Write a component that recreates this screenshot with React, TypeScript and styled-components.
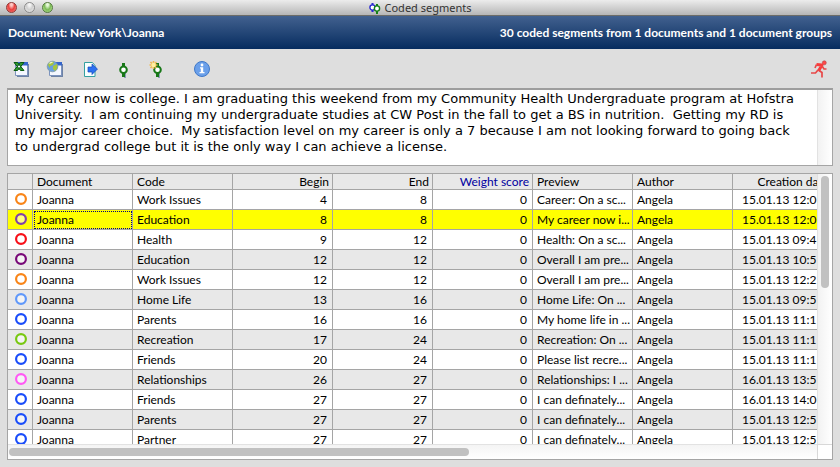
import React from "react";
import styled, { createGlobalStyle } from "styled-components";

const line = "#a5a5a5";

const GlobalStyle = createGlobalStyle`
  * { box-sizing: border-box; }
  body { margin: 0; background: #dedede; }
`;

const Window = styled.main`
  display: flex;
  flex-direction: column;
  height: 100vh;
  background: #dedede;
  color: #000;
  font: 12px/16px Lato, "Open Sans", sans-serif;
`;

const TitleBar = styled.header`
  position: relative;
  display: flex;
  align-items: center;
  justify-content: center;
  gap: 4px;
  height: 16px;
  flex: none;
  background: linear-gradient(#ececec, #b6b6b6);
  border-bottom: 1px solid #6c6c68;
`;

const Title = styled.h1`
  margin: 0;
  font: 11px/15px "Noto Sans", sans-serif;
  color: #333;
`;

const Lights = styled.div`
  position: absolute;
  left: 6px;
  top: 2px;
  display: flex;
  gap: 7px;
`;

const Light = styled.button<{ $top: string; $mid: string; $low: string; $edge: string }>`
  width: 11px;
  height: 11px;
  padding: 0;
  border: 1px solid ${(p) => p.$edge};
  border-radius: 50%;
  background: radial-gradient(ellipse at 50% 15%, ${(p) => p.$top} 0 15%, ${(p) => p.$mid} 50%, ${(p) => p.$low});
`;

const Banner = styled.section`
  display: flex;
  align-items: center;
  justify-content: space-between;
  height: 33px;
  flex: none;
  padding: 0 8px;
  color: #fff;
  font-weight: 700;
  white-space: nowrap;
  background: linear-gradient(#42618f, #062c5f);
`;

const Toolbar = styled.nav`
  display: flex;
  align-items: center;
  height: 39px;
  flex: none;
  padding: 0 12px 0 13px;
`;

const Tool = styled.button<{ $gap?: number; $end?: boolean }>`
  display: flex;
  width: 18px;
  height: 18px;
  padding: 0;
  border: 0;
  background: none;
  margin-left: ${(p) => (p.$end ? "auto" : `${p.$gap ?? 0}px`)};
`;

const Icon = styled.svg`
  display: block;
  flex: none;
`;

const Panel = styled.section`
  display: grid;
  grid-template-columns: minmax(0, 1fr) 15px;
  margin: 0 7px;
  border: 1px solid ${line};
  background: #fff;
  overflow: hidden;
`;

const TextPanel = styled(Panel)`
  height: 78px;
  flex: none;
  border-top: 2px solid #9d9d9d;
`;

const Passage = styled.p`
  margin: 0;
  padding: 1px 14px 0 7px;
  font: 13px/16px "DejaVu Sans", sans-serif;
`;

const TablePanel = styled(Panel)`
  flex: 1;
  min-height: 0;
  margin: 7px 7px;
  grid-template-rows: minmax(0, 1fr) 15px;
`;

const Viewport = styled.div`
  overflow: hidden;
`;

const VTrack = styled.div`
  padding: 2px 3px;
  border-left: 1px solid #e2e2e2;
  background: linear-gradient(90deg, #f2f2f2, #fff);
`;

const HTrack = styled.div`
  padding: 3px 1px;
  border-top: 1px solid #e2e2e2;
  background: linear-gradient(#f4f4f4, #fff);
`;

const Corner = styled.div`
  border-left: 1px solid #d8d8d8;
  border-top: 1px solid #d8d8d8;
`;

const VThumb = styled.div`
  width: 8px;
  height: 42%;
  border-radius: 4px;
  background: #c1c1c1;
`;

const HThumb = styled.div`
  width: 57%;
  height: 8px;
  border-radius: 4px;
  background: #c1c1c1;
`;

const Table = styled.table`
  width: 825px;
  min-width: 100%;
  table-layout: fixed;
  border-collapse: separate;
  border-spacing: 0;
  white-space: nowrap;
`;

const Col = styled.col<{ $w: number }>`
  width: ${(p) => p.$w}px;
`;

const Head = styled.th<{ $right?: boolean; $sorted?: boolean }>`
  height: 16px;
  padding: 0 ${(p) => (p.$right ? 3 : 4)}px 0 4px;
  overflow: hidden;
  border: solid ${line};
  border-width: 0 1px 1px 0;
  background: #e8e8e8;
  color: ${(p) => (p.$sorted ? "#0000a0" : "#000")};
  font-weight: 400;
  line-height: 15px;
  text-align: ${(p) => (p.$right ? "right" : "left")};
`;

const Row = styled.tr<{ $selected: boolean }>`
  background: ${(p) => (p.$selected ? "#ffff00" : "#fff")};
  &:nth-child(even) {
    background: ${(p) => (p.$selected ? "#ffff00" : "#e8e8e8")};
  }
`;

const Cell = styled.td<{ $right?: boolean; $focus?: boolean; $date?: boolean }>`
  height: 20px;
  padding: 1px ${(p) => (p.$right ? 5 : 4)}px 0 ${(p) => (p.$date ? 9 : 4)}px;
  overflow: hidden;
  border: solid ${line};
  border-width: 0 1px 1px 0;
  line-height: 18px;
  text-align: ${(p) => (p.$right ? "right" : "left")};
  outline: ${(p) => (p.$focus ? "1px dotted #000080" : "none")};
  outline-offset: -2px;
`;

const RingCell = styled(Cell)`
  padding: 0 0 1px 7px;
`;

const orange = "#f98518";
const blue = "#1a4dfa";

type Segment = [string, string, number, number, string, string];

const segments: Segment[] = [
  [orange, "Work Issues", 4, 8, "Career: On a sc...", "15.01.13 12:0"],
  ["#8040a8", "Education", 8, 8, "My career now i...", "15.01.13 12:0"],
  ["#f81018", "Health", 9, 12, "Health: On a sc...", "15.01.13 09:4"],
  ["#780878", "Education", 12, 12, "Overall I am pre...", "15.01.13 10:5"],
  [orange, "Work Issues", 12, 12, "Overall I am pre...", "15.01.13 12:2"],
  ["#6098fa", "Home Life", 13, 16, "Home Life: On ...", "15.01.13 09:5"],
  [blue, "Parents", 16, 16, "My home life in ...", "15.01.13 11:1"],
  ["#78c810", "Recreation", 17, 24, "Recreation: On ...", "15.01.13 11:1"],
  [blue, "Friends", 20, 24, "Please list recre...", "15.01.13 11:1"],
  ["#ff58f4", "Relationships", 26, 27, "Relationships: I ...", "16.01.13 13:5"],
  [blue, "Friends", 27, 27, "I can definately...", "16.01.13 14:0"],
  [blue, "Parents", 27, 27, "I can definately...", "15.01.13 12:5"],
  [blue, "Partner", 27, 27, "I can definately...", "15.01.13 12:5"],
];

const Ring = ({ color }: { color: string }) => (
  <Icon width="12" height="12" viewBox="0 0 12 12">
    <circle cx="6" cy="6" r="4.9" fill="#fff" fillOpacity="0.5" stroke={color} strokeWidth="2.2" />
  </Icon>
);

const WindowShape = () => (
  <>
    <path d="M4 4h12v13H4z" fill="#6d82a5" />
    <path d="M2.500 2.500h12v13h-12z" fill="#f4f7ff" stroke="#7d93bd" />
    <path d="M2 2h13v3.500H2z" fill="#3465cc" />
  </>
);

const CodeShape = ({ color }: { color: string }) => (
  <>
    <path d="M11 13v5" stroke="#8d9db8" strokeWidth="2" />
    <path d="M9.500 3v4M9.500 12v5" stroke={color} strokeWidth="3" />
    <circle cx="9.500" cy="9.800" r="3.300" fill="#fff" stroke={color} strokeWidth="2" />
  </>
);

export default function App() {
  return (
    <Window>
      <GlobalStyle />
      <TitleBar>
        <Lights>
          <Light aria-label="Close" $top="#ffc8c4" $mid="#e8413f" $low="#ff8a80" $edge="#8f3a38" />
          <Light aria-label="Minimize" $top="#f4f4f4" $mid="#cfcfcf" $low="#f0f0f0" $edge="#8c8c8c" />
          <Light aria-label="Zoom" $top="#e6f8d8" $mid="#7dbb58" $low="#c4f09c" $edge="#54793e" />
        </Lights>
        <Icon width="12" height="12" viewBox="0 0 12 12">
          <path d="M3.500 1v3M3.500 8v2" stroke="#2a2ad0" strokeWidth="2" />
          <circle cx="3.500" cy="5.500" r="2.600" fill="#fff" stroke="#2a2ad0" strokeWidth="1.400" />
          <path d="M8 2v2M8 9v3" stroke="#178017" strokeWidth="2" />
          <circle cx="8" cy="6.500" r="2.600" fill="#fff" stroke="#178017" strokeWidth="1.400" />
        </Icon>
        <Title>Coded segments</Title>
      </TitleBar>
      <Banner>
        <span>Document: New York\Joanna</span>
        <span>30 coded segments from 1 documents and 1 document groups</span>
      </Banner>
      <Toolbar>
        <Tool aria-label="Open as Excel table">
          <Icon width="18" height="18" viewBox="0 0 18 18">
            <WindowShape />
            <path d="M1 2.500h3.500l6.500 8H7.500zM11 2.500H7.500l-6.500 8h3.500z" fill="#2f9a2f" stroke="#0a5a10" strokeWidth="1" />
          </Icon>
        </Tool>
        <Tool aria-label="Open as HTML table" $gap={15}>
          <Icon width="18" height="18" viewBox="0 0 18 18">
            <g transform="translate(1 0)"><WindowShape /></g>
            <circle cx="6.500" cy="6.500" r="5.300" fill="#6ba0dc" stroke="#7d98a8" strokeWidth="0.800" />
            <path d="M2 5q1-4 6-3l-1 3-3 1v2zM7 6l4-2q1.500 4-2 7l-2-2z" fill="#a8c63c" />
            <path d="M3.500 3.500q2-1.500 3-1" fill="none" stroke="#f0f6d0" strokeWidth="1.200" />
          </Icon>
        </Tool>
        <Tool aria-label="Export" $gap={18}>
          <Icon width="18" height="18" viewBox="0 0 18 18">
            <path d="M2.500 2.500h8l2.500 3v11H2.500z" fill="#f8ffff" stroke="#35a0a0" />
            <path d="M6 7h4V4l5.500 5-5.500 5.500V12H6z" fill="#2c70f0" stroke="#1648b8" strokeWidth="0.700" />
          </Icon>
        </Tool>
        <Tool aria-label="Code" $gap={14}>
          <Icon width="18" height="18" viewBox="0 0 18 18">
            <CodeShape color="#187818" />
          </Icon>
        </Tool>
        <Tool aria-label="New code" $gap={16}>
          <Icon width="18" height="18" viewBox="0 0 18 18">
            <CodeShape color="#187818" />
            <path d="M5.500 1v8M1.500 5h8M2.500 2l6 6M8.500 2l-6 6" stroke="#f0b850" strokeWidth="1.600" />
            <circle cx="5.500" cy="5" r="2.200" fill="#fff0a0" />
          </Icon>
        </Tool>
        <Tool aria-label="Info" $gap={27}>
          <Icon width="18" height="18" viewBox="0 0 18 18">
            <circle cx="9" cy="9" r="7.500" fill="#6ba0ea" stroke="#3f78c8" />
            <circle cx="9" cy="5" r="1.400" fill="#fff" />
            <path d="M7 7.200h3.200v4.800h1.300v1.200h-5V12h1.300V8.400H7z" fill="#fff" />
          </Icon>
        </Tool>
        <Tool aria-label="Exit" $end>
          <Icon width="18" height="18" viewBox="0 0 18 18">
            <circle cx="14.300" cy="2.800" r="2" fill="#ff4848" stroke="#b04848" strokeWidth="0.600" />
            <path d="M6.500 4.500L12 5l-3.500 6" fill="none" stroke="#f83c3c" strokeWidth="3" strokeLinejoin="round" />
            <path d="M6.500 4.500L5 8M12 6l2 3h2.500M8 10l-2.500 3H1M9 10.500l3 2v5" fill="none" stroke="#e84848" strokeWidth="1.700" />
          </Icon>
        </Tool>
      </Toolbar>
      <TextPanel>
        <Passage>
          {"My career now is college. I am graduating this weekend from my Community Health Undergraduate program at Hofstra University. \u00a0I am continuing my undergraduate studies at CW Post in the fall to get a BS in nutrition. \u00a0Getting my RD is my major career choice. \u00a0My satisfaction level on my career is only a 7 because I am not looking forward to going back to undergrad college but it is the only way I can achieve a license."}
        </Passage>
        <VTrack />
      </TextPanel>
      <TablePanel>
        <Viewport>
          <Table>
            <colgroup>
              <Col $w={25} />
              {[1, 2, 3, 4, 5, 6, 7, 8].map((n) => (
                <Col key={n} $w={100} />
              ))}
            </colgroup>
            <thead>
              <tr>
                <Head />
                <Head>Document</Head>
                <Head>Code</Head>
                <Head $right>Begin</Head>
                <Head $right>End</Head>
                <Head $right $sorted>Weight score</Head>
                <Head>Preview</Head>
                <Head>Author</Head>
                <Head $right>Creation date</Head>
              </tr>
            </thead>
            <tbody>
              {segments.map(([color, code, begin, end, preview, created], i) => (
                <Row key={i} $selected={i === 1}>
                  <RingCell><Ring color={color} /></RingCell>
                  <Cell $focus={i === 1}>Joanna</Cell>
                  <Cell>{code}</Cell>
                  <Cell $right>{begin}</Cell>
                  <Cell $right>{end}</Cell>
                  <Cell $right>0</Cell>
                  <Cell>{preview}</Cell>
                  <Cell>Angela</Cell>
                  <Cell $date>{created}</Cell>
                </Row>
              ))}
            </tbody>
          </Table>
        </Viewport>
        <VTrack><VThumb /></VTrack>
        <HTrack><HThumb /></HTrack>
        <Corner />
      </TablePanel>
    </Window>
  );
}
